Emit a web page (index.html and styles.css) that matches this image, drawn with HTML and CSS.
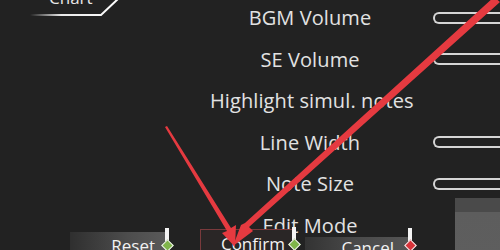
FILE: index.html
```html
<!DOCTYPE html>
<html>
<head>
<meta charset="utf-8">
<link rel="stylesheet" href="styles.css">
</head>
<body>
<div class="screen">
  <div class="chart-tab">
    <span class="chart-label">Chart</span>
    <svg class="chart-line" width="130" height="20" viewBox="0 0 130 20">
      <defs>
        <linearGradient id="fade" x1="0" x2="1" y1="0" y2="0">
          <stop offset="0" stop-color="#fff" stop-opacity="0"/>
          <stop offset="0.35" stop-color="#fff" stop-opacity="0.9"/>
          <stop offset="1" stop-color="#fff"/>
        </linearGradient>
      </defs>
      <polyline points="30,15 101,15 119,-2" fill="none" stroke="url(#fade)" stroke-width="2"/>
    </svg>
  </div>

  <div class="settings">
    <div class="row"><span class="label">BGM Volume</span><span class="slider"></span></div>
    <div class="row"><span class="label">SE Volume</span><span class="slider"></span></div>
    <div class="row"><span class="label">Highlight simul. notes</span></div>
    <div class="row"><span class="label">Line Width</span><span class="slider"></span></div>
    <div class="row"><span class="label">Note Size</span><span class="slider"></span></div>
    <div class="row"><span class="label">Edit Mode</span></div>
  </div>

  <div class="block"></div>

  <div class="buttons">
    <div class="btn btn-reset"><span class="btn-text">Reset</span><span class="key"><i class="bar"></i><i class="gem green"></i></span></div>
    <div class="btn btn-confirm"><span class="btn-text">Confirm</span><span class="key"><i class="bar"></i><i class="gem green"></i></span></div>
    <div class="btn btn-cancel"><span class="btn-text">Cancel</span><span class="key"><i class="bar"></i><i class="gem red"></i></span></div>
  </div>

  <svg class="arrows" width="500" height="250" viewBox="0 0 500 250">
    <polygon points="165,127 167,126 231,228 236,225 235,247 222,233 227,231" fill="#e53a40"/>
    <polygon points="494,-3 500,2 249,227 253,231 233,246 241,225 245,223" fill="#e53a40"/>
  </svg>
</div>
</body>
</html>
```

FILE: styles.css
```css
html, body {
  margin: 0;
  padding: 0;
  background: #222222;
}

.screen {
  position: relative;
  width: 500px;
  height: 250px;
  overflow: hidden;
  background: #222222;
  font-family: "Open Sans", "DejaVu Sans", sans-serif;
  color: #e2e2e2;
}

.chart-tab {
  position: absolute;
  left: 0;
  top: 0;
  width: 130px;
  height: 20px;
}

.chart-label {
  position: absolute;
  left: 49px;
  top: -14px;
  font-size: 17px;
  color: #e8e8e8;
}

.chart-line {
  position: absolute;
  left: 0;
  top: 0;
}

.settings {
  display: flex;
  flex-direction: column;
  margin-top: -3px;
  width: 500px;
  overflow: hidden;
}

.row {
  display: flex;
  align-items: center;
  height: 41.5px;
}

.label {
  flex: 0 0 200px;
  margin-left: 210px;
  text-align: center;
  font-size: 20px;
  font-weight: 500;
  letter-spacing: 0.1px;
  white-space: nowrap;
}

.slider {
  flex: 0 0 120px;
  margin-left: 23px;
  height: 8px;
  border: 2px solid #d6d6d6;
  border-right: none;
  border-radius: 6px 0 0 6px;
}

.block {
  position: absolute;
  left: 455px;
  top: 198px;
  width: 50px;
  height: 60px;
  background: linear-gradient(180deg, #4a4a4a 0, #4a4a4a 14px, #5d5d5d 14px, #5e5e5e 100%);
}

.buttons {
  position: absolute;
  left: 0;
  bottom: 0;
  width: 500px;
  height: 24px;
}

.btn {
  position: absolute;
  bottom: -4px;
  height: 22px;
  display: flex;
  align-items: center;
  justify-content: flex-end;
  font-size: 17px;
  color: #f2f2f2;
}

.btn-reset {
  left: 70px;
  width: 97px;
  background: linear-gradient(90deg, #2f2f2f 0, #4d4d4d 60%, #5a5a5a 100%);
}

.btn-confirm {
  left: 200px;
  width: 93px;
  height: 23px;
  background: #2a2626;
  border: 1px solid #7a3a3c;
}

.btn-cancel {
  left: 305px;
  width: 105px;
  height: 17px;
  background: linear-gradient(90deg, #333 0, #4a4a4a 50%, #555 100%);
}

.btn-text {
  margin-right: 12px;
  line-height: 20px;
  padding-top: 5px;
}

.btn-confirm .btn-text { margin-right: 9px; }
.btn-cancel .btn-text { margin-right: 16px; }

.key {
  position: absolute;
  right: -6px;
  bottom: 0;
  width: 12px;
  height: 26px;
}

.bar {
  position: absolute;
  left: 4px;
  top: 0;
  width: 4px;
  height: 13px;
  background: #f4f4f4;
}

.gem {
  position: absolute;
  left: 2px;
  top: 13px;
  width: 7px;
  height: 7px;
  transform: rotate(45deg);
  border: 1px solid #f0f0f0;
}

.gem.green { background: #7fb54a; }
.gem.red { background: #d8333a; }

.arrows {
  position: absolute;
  left: 0;
  top: 0;
}
```
